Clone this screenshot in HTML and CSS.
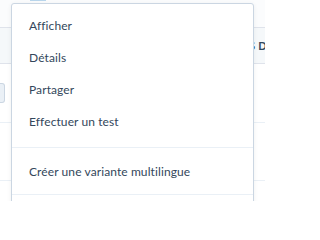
FILE: index.html
```html
<!DOCTYPE html>
<html lang="fr">
<head>
<meta charset="utf-8">
<title>Menu</title>
<link rel="stylesheet" href="styles.css">
</head>
<body>
<div class="page">
  <div class="toolbar"><span class="btn-edge"></span></div>
  <div class="thead"><span class="th">VUES DE PAGE</span></div>
  <div class="row"><span class="cell-box"></span></div>
  <div class="row"></div>
  <div class="row"></div>

  <div class="menu">
    <ul class="menu-list">
      <li class="item">Afficher</li>
      <li class="item">Détails</li>
      <li class="item">Partager</li>
      <li class="item">Effectuer un test</li>
    </ul>
    <div class="sep"></div>
    <ul class="menu-list">
      <li class="item">Créer une variante multilingue</li>
    </ul>
    <div class="sep sep-last"></div>
  </div>
</div>
</body>
</html>
```

FILE: styles.css
```css
html, body {
  margin: 0;
  padding: 0;
  background: #ffffff;
}
.page {
  position: relative;
  width: 265px;
  height: 201px;
  overflow: hidden;
  font-family: Lato, "Noto Sans", sans-serif;
  color: #33475b;
}
.toolbar {
  height: 27px;
  background: #fbfcfd;
}
.btn-edge {
  display: block;
  margin-left: 30px;
  width: 16px;
  height: 1px;
  background: #b9d6ec;
}
.thead {
  box-sizing: border-box;
  height: 37px;
  background: #f5f8fa;
  border-top: 1px solid #dfe3eb;
  border-bottom: 1px solid #dfe3eb;
  display: flex;
  align-items: center;
  padding-left: 226px;
  overflow: hidden;
}
.th {
  font-size: 11px;
  font-weight: 700;
  white-space: nowrap;
  letter-spacing: 0.3px;
}
.row {
  box-sizing: border-box;
  height: 59px;
  border-bottom: 1px solid #eaf0f6;
  display: flex;
  align-items: center;
}
.row:nth-of-type(4) { height: 58px; }
.cell-box {
  display: block;
  width: 4px;
  height: 18px;
  background: #eaf0f6;
  border: 1px solid #cbd6e2;
  border-left: none;
  border-radius: 0 3px 3px 0;
  margin-top: -1px;
}
.menu {
  position: absolute;
  left: 11px;
  top: 3px;
  width: 243px;
  height: 220px;
  box-sizing: border-box;
  background: #ffffff;
  border: 1px solid #cbd6e2;
  border-radius: 3px;
  box-shadow: 0 1px 4px rgba(45, 62, 80, 0.08);
  padding-top: 6px;
}
.menu-list {
  list-style: none;
  margin: 0;
  padding: 0;
}
.item {
  height: 32px;
  line-height: 32px;
  padding-left: 17px;
  font-size: 12px;
  letter-spacing: 0.1px;
  white-space: nowrap;
}
.sep {
  height: 1px;
  background: #eaf0f6;
  margin: 9px 0 8px;
}
.sep-last {
  margin-top: 6px;
}
```
